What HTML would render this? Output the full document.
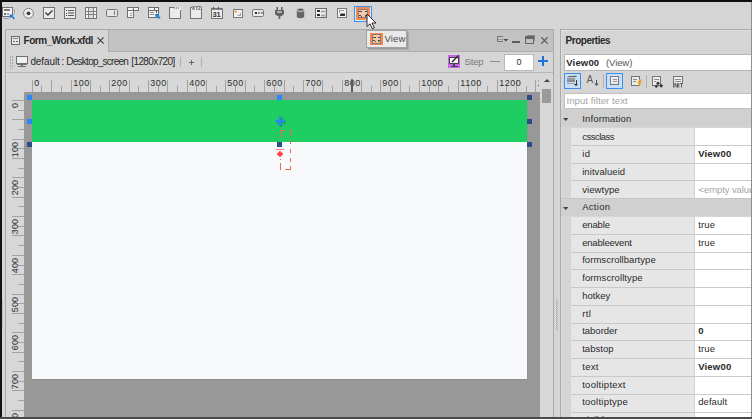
<!DOCTYPE html>
<html><head><meta charset="utf-8">
<style>
*{margin:0;padding:0;box-sizing:border-box}
html,body{width:752px;height:419px;overflow:hidden}
body{position:relative;background:#d5d5d5;font-family:"Liberation Sans",sans-serif;font-size:10px;color:#222}
.a{position:absolute}
.t{position:absolute;white-space:nowrap;line-height:1}
svg{shape-rendering:crispEdges}
.ge{shape-rendering:geometricPrecision}
</style></head>
<body>

<svg class="a" style="left:2px;top:6px;" width="14" height="14" viewBox="0 0 14 14"><rect x="0.5" y="1.5" width="10" height="9" fill="#f4f4f4" stroke="#737373"/><rect x="2" y="3" width="6" height="2" fill="#7c7c7c"/><rect x="2" y="6.5" width="2" height="2" fill="#6a6a6a"/><rect x="5" y="6.5" width="2" height="2" fill="#9a9a9a"/><rect x="1" y="11.5" width="6" height="1" fill="#a0a0a0"/><rect x="11.5" y="3" width="1" height="5" fill="#a8a8a8"/><path class="ge" d="M7.5 8.5 L12 8.5 L10.6 9.9 L13 12.3 L11.8 13.5 L9.4 11.1 L8 12.5 Z" fill="#1f7fe6"/></svg>
<svg class="a" style="left:23px;top:8px;shape-rendering:geometricPrecision" width="11" height="11" viewBox="0 0 11 11"><circle cx="5.5" cy="5.3" r="4.9" fill="#f0f0f0" stroke="#7d7d7d" stroke-width="1"/><circle cx="5.5" cy="5.3" r="1.9" fill="#3f3f3f"/></svg>
<svg class="a" style="left:43px;top:7px;" width="12" height="12" viewBox="0 0 12 12"><rect x="0.5" y="0.5" width="11" height="11" fill="#ebebeb" stroke="#727272"/><path class="ge" d="M2.5 5.6 L4.9 8.1 L9.5 3.6" fill="none" stroke="#3d3d3d" stroke-width="1.4"/></svg>
<svg class="a" style="left:64px;top:7px;" width="12" height="12" viewBox="0 0 12 12"><rect x="0.5" y="0.5" width="11" height="11" fill="#ececec" stroke="#727272"/><rect x="2" y="3" width="1" height="1" fill="#444"/><rect x="4" y="3" width="6" height="1" fill="#5a5a5a"/><rect x="2" y="5.5" width="1" height="1" fill="#444"/><rect x="4" y="5.3" width="6" height="1.4" fill="#999"/><rect x="2" y="8" width="1" height="1" fill="#444"/><rect x="4" y="8" width="6" height="1" fill="#5a5a5a"/></svg>
<svg class="a" style="left:85px;top:7px;" width="12" height="12" viewBox="0 0 12 12"><rect x="0.5" y="0.5" width="11" height="11" fill="#f4f4f4" stroke="#727272"/><path d="M0 4.5H12M0 7.5H12M3.5 0V12M8.5 0V12" stroke="#808080" fill="none"/><rect x="4" y="1" width="4" height="3" fill="#dcdcdc"/><rect x="4" y="5" width="4" height="2" fill="#dcdcdc"/><rect x="4" y="8" width="4" height="3" fill="#dcdcdc"/></svg>
<svg class="a" style="left:106px;top:9px;" width="12" height="8" viewBox="0 0 12 8"><rect x="0.5" y="0.5" width="11" height="7" rx="1.2" fill="#e6e6e6" stroke="#777" class="ge"/><rect x="8" y="2" width="1" height="4" fill="#7a7a7a"/></svg>
<svg class="a" style="left:127px;top:7px;" width="12" height="11" viewBox="0 0 12 11"><rect x="0.5" y="0.5" width="11" height="3" fill="#f4f4f4" stroke="#707070"/><rect x="6" y="0.5" width="1" height="3" fill="#707070"/><rect x="0.5" y="3.5" width="6" height="7" fill="#f4f4f4" stroke="#707070"/><rect x="2.5" y="5.5" width="2" height="1" fill="#999"/><rect x="2.5" y="7.5" width="2" height="1" fill="#999"/></svg>
<svg class="a" style="left:148px;top:7px;" width="13" height="12" viewBox="0 0 13 12"><rect x="0.5" y="0.5" width="10" height="10" fill="#f6f6f6" stroke="#6c6c6c"/><rect x="0.5" y="0.5" width="10" height="2.5" fill="#f6f6f6" stroke="#6c6c6c"/><rect x="6" y="0.5" width="1" height="2.5" fill="#6c6c6c"/><rect x="7.5" y="3" width="1" height="2.5" fill="#555"/><rect x="2" y="5" width="4" height="1" fill="#888"/><rect x="2" y="7" width="4" height="1" fill="#888"/><path class="ge" d="M7 7 L11.5 7 L10.2 8.3 L12.6 10.7 L11.4 11.9 L9 9.5 L7.7 10.8 Z" fill="#1f7fe6"/></svg>
<svg class="a" style="left:169px;top:7px;" width="12" height="12" viewBox="0 0 12 12"><rect x="0.5" y="0.5" width="11" height="11" fill="#ebebeb" stroke="#737373"/><rect x="4.5" y="0" width="7" height="2.6" fill="#ebebeb"/><rect x="5" y="0.3" width="1.3" height="1.8" fill="#9a9a9a"/><rect x="7" y="0.3" width="1.3" height="1.8" fill="#9a9a9a"/><rect x="9" y="0.3" width="1.3" height="1.8" fill="#9a9a9a"/></svg>
<svg class="a" style="left:190px;top:7px;" width="12" height="12" viewBox="0 0 12 12"><rect x="0.5" y="0.5" width="11" height="11" fill="#ebebeb" stroke="#737373"/><rect x="1.5" y="0" width="9" height="3.6" fill="#ebebeb"/></svg>
<div class="t" style="left:191.8px;top:6.6px;font-size:4.8px;font-weight:bold;color:#4a4a4a;letter-spacing:-0.1px">XYZ</div>
<svg class="a" style="left:211px;top:7px;" width="12" height="12" viewBox="0 0 12 12"><rect x="0.5" y="1.5" width="11" height="10" fill="#ededed" stroke="#737373"/><rect x="1" y="2" width="10" height="1" fill="#8a8a8a"/><rect x="2" y="0" width="1" height="2" fill="#555"/><rect x="4" y="0.5" width="1.5" height="1.5" fill="#777"/><rect x="6.5" y="0" width="1" height="2" fill="#555"/><rect x="8.5" y="0.5" width="1.5" height="1.5" fill="#777"/></svg>
<div class="t" style="left:212.4px;top:11px;font-size:7.6px;font-weight:bold;color:#3a3a3a;letter-spacing:-0.1px">31</div>
<svg class="a" style="left:233px;top:9px;shape-rendering:geometricPrecision" width="10" height="9" viewBox="0 0 10 9"><rect x="0.5" y="0.5" width="9" height="8" fill="#f2f2f2" stroke="#787878"/><circle cx="2.7" cy="2.6" r="1.2" fill="#eea020"/><path d="M4.5 7 L8 7 L8 4 L7 4 L7 5.5 L6 5.5 L6 6 L4.5 6 Z" fill="#a4a4a4"/></svg>
<svg class="a" style="left:252px;top:9px;" width="12" height="8" viewBox="0 0 12 8"><rect x="0.5" y="0.5" width="11" height="7" rx="1.2" fill="#e9e9e9" stroke="#777" class="ge"/><rect x="2.5" y="3" width="2" height="2" fill="#2f2f2f"/><rect x="5.5" y="3" width="2" height="2" fill="#8e8e8e"/><rect x="8.5" y="3" width="2" height="2" fill="#8e8e8e"/></svg>
<svg class="a" style="left:275px;top:7px;shape-rendering:geometricPrecision" width="9" height="12" viewBox="0 0 9 12"><rect x="1.5" y="0" width="1.5" height="3.5" fill="#5e5e5e"/><rect x="6" y="0" width="1.5" height="3.5" fill="#5e5e5e"/><path d="M0 3 H9 V6.3 Q9 8.3 5.3 9.2 V12 H3.7 V9.2 Q0 8.3 0 6.3 Z" fill="#626262"/><rect x="2" y="4.3" width="5" height="1.3" fill="#d8d8d8"/></svg>
<svg class="a" style="left:296px;top:8px;shape-rendering:geometricPrecision" width="9" height="11" viewBox="0 0 9 11"><path d="M0.8 1.8 Q4.5 -0.6 8.2 1.8 V9.2 Q4.5 11.2 0.8 9.2 Z" fill="#666"/><path d="M0.8 2.6 Q4.5 4.6 8.2 2.6" stroke="#dcdcdc" fill="none" stroke-width="0.9"/></svg>
<svg class="a" style="left:315px;top:8px;" width="12" height="10" viewBox="0 0 12 10"><rect x="0.5" y="0.5" width="11" height="9" fill="#f0f0f0" stroke="#6c6c6c"/><rect x="2" y="2" width="2.5" height="2" fill="#2e2e2e"/><rect x="2" y="6" width="2.5" height="2" fill="#2e2e2e"/><rect x="5.5" y="1.5" width="5" height="3" fill="#cfcfcf"/><rect x="5.5" y="5.5" width="5" height="3" fill="#cfcfcf"/><rect x="6" y="2.7" width="4" height="0.8" fill="#a0a0a0"/><rect x="6" y="6.7" width="4" height="0.8" fill="#a0a0a0"/></svg>
<svg class="a" style="left:337px;top:8px;shape-rendering:geometricPrecision" width="10" height="10" viewBox="0 0 10 10"><rect x="0.5" y="0.5" width="9" height="9" fill="#f4f4f4" stroke="#777"/><rect x="2" y="2" width="5" height="1" fill="#9a9a9a"/><rect x="2" y="3" width="1" height="2" fill="#9a9a9a"/><path d="M3 8 L3 6.5 Q3 5.5 4 5.5 L8 5.5 L8 8 Z" fill="#2e2e2e"/></svg>
<div class="a" style="left:354px;top:6px;width:18px;height:16px;border:1px solid #3b8ff5;background:#dde9f7"></div>
<svg class="a" style="left:356px;top:7px;" width="14" height="13" viewBox="0 0 14 13"><rect x="0" y="0" width="14" height="13" fill="#f58b50"/><rect x="2.5" y="2.5" width="9" height="8" fill="#f9c6a8" stroke="#857a74"/><path d="M3 4.5 H5 M5 3.5 V4.5 M9 4.5 H11 M9 3.5 V4.5 M3 8.5 H5 M5 8.5 V9.5 M9 8.5 H11 M9 8.5 V9.5" stroke="#4a4a4a" stroke-width="1" fill="none"/></svg>
<div class="a" style="left:5px;top:29px;width:549px;height:388px;border:1px solid #a9a9a9;border-bottom:none;background:#d5d5d5"></div>
<div class="a" style="left:6px;top:30px;width:547px;height:21px;background:#c2c2c2"></div>
<div class="a" style="left:6px;top:51px;width:547px;height:1px;background:#adadad"></div>
<div class="a" style="left:6px;top:30px;width:103px;height:22px;background:#d5d5d5;border-right:1px solid #adadad"></div>
<svg class="a" style="left:11px;top:36px;" width="9" height="9" viewBox="0 0 9 9"><rect x="0.5" y="0.5" width="8" height="8" fill="#e6e6e6" stroke="#6a6a6a"/><rect x="2" y="2" width="5" height="1" fill="#8a8a8a"/><rect x="2" y="5" width="2" height="1" fill="#6a6a6a"/><rect x="5" y="5" width="2" height="1" fill="#6a6a6a"/><rect x="2" y="3.5" width="5" height="0.8" fill="#aaa"/></svg>
<div class="t" style="left:23.6px;top:36px;font-size:10px;letter-spacing:-0.472px;font-weight:bold;color:#2a2a2a">Form_Work.xfdl</div>
<svg class="a" style="left:97px;top:37px;shape-rendering:geometricPrecision" width="7" height="7" viewBox="0 0 7 7"><path d="M0.4 0.4 L6.6 6.6 M6.6 0.4 L0.4 6.6" stroke="#3a3a3a" stroke-width="1.05" fill="none"/></svg>
<svg class="a" style="left:497px;top:36px;" width="12" height="7" viewBox="0 0 12 7"><rect x="0" y="0" width="6" height="1" fill="#777"/><rect x="0" y="0" width="1" height="6" fill="#777"/><rect x="1" y="2.5" width="5" height="1" fill="#9a9a9a"/><rect x="0" y="5" width="6" height="1" fill="#777"/><path d="M6.3 3 L11.3 3 L8.8 5.6 Z" fill="#4a4a4a" class="ge"/></svg>
<div class="a" style="left:512px;top:41px;width:8px;height:2px;background:#5e5e5e"></div>
<svg class="a" style="left:525px;top:35px;" width="10" height="9" viewBox="0 0 10 9"><rect x="0.5" y="1.5" width="8" height="7" fill="none" stroke="#666"/><rect x="1" y="2" width="7" height="1.5" fill="#666"/><path d="M2 0.5 H9.5 V6" stroke="#888" fill="none"/></svg>
<svg class="a" style="left:541px;top:37px;shape-rendering:geometricPrecision" width="7" height="7" viewBox="0 0 7 7"><path d="M0.3 0.3 L6.7 6.7 M6.7 0.3 L0.3 6.7" stroke="#505050" stroke-width="1.1" fill="none"/></svg>
<div class="a" style="left:6px;top:72px;width:547px;height:1px;background:#b6b6b6"></div>
<svg class="a" style="left:10px;top:56px;" width="3" height="13" viewBox="0 0 3 13"><rect x="0" y="0" width="1" height="1.5" fill="#a8a8a8"/><rect x="2" y="0" width="1" height="1.5" fill="#a8a8a8"/><rect x="0" y="3" width="1" height="1.5" fill="#a8a8a8"/><rect x="2" y="3" width="1" height="1.5" fill="#a8a8a8"/><rect x="0" y="6" width="1" height="1.5" fill="#a8a8a8"/><rect x="2" y="6" width="1" height="1.5" fill="#a8a8a8"/><rect x="0" y="9" width="1" height="1.5" fill="#a8a8a8"/><rect x="2" y="9" width="1" height="1.5" fill="#a8a8a8"/><rect x="0" y="12" width="1" height="1.5" fill="#a8a8a8"/><rect x="2" y="12" width="1" height="1.5" fill="#a8a8a8"/></svg>
<svg class="a" style="left:16px;top:56px;" width="12" height="11" viewBox="0 0 12 11"><rect x="0.5" y="0.5" width="11" height="7.5" rx="0.8" fill="#f0f0f0" stroke="#707070"/><rect x="1" y="7" width="10" height="1.5" fill="#707070"/><rect x="5" y="8.5" width="2" height="1.5" fill="#777"/><rect x="2" y="10" width="8" height="1" fill="#707070"/></svg>
<div class="t" style="left:30.4px;top:57px;font-size:10px;letter-spacing:-0.089px;color:#2a2a2a">default</div>
<div class="t" style="left:61.6px;top:57px;font-size:10px;color:#2a2a2a">:</div>
<div class="t" style="left:66.3px;top:57px;font-size:10px;letter-spacing:-0.744px;color:#2a2a2a">Desktop_screen</div>
<div class="t" style="left:131.3px;top:57px;font-size:10px;letter-spacing:-0.611px;color:#2a2a2a">[1280x720]</div>
<div class="a" style="left:180px;top:57px;width:1px;height:10px;background:#b0b0b0"></div>
<svg class="a" style="left:189px;top:60px;" width="5" height="5" viewBox="0 0 5 5"><rect x="2" y="0" width="1" height="5" fill="#666"/><rect x="0" y="2" width="5" height="1" fill="#666"/></svg>
<div class="a" style="left:201px;top:57px;width:1px;height:10px;background:#b0b0b0"></div>
<svg class="a" style="left:448px;top:55px;" width="12" height="13" viewBox="0 0 12 13"><rect x="0" y="0" width="12" height="13" fill="#c467ee"/><rect x="1.5" y="2.5" width="9" height="6" fill="#f2f2f2" stroke="#444"/><rect x="5" y="9" width="2" height="2" fill="#444"/><rect x="2.5" y="11" width="7" height="1" fill="#444"/><path class="ge" d="M4 7 L10.5 0.5" stroke="#222" stroke-width="1.3"/></svg>
<div class="t" style="left:464.6px;top:57px;font-size:9.5px;letter-spacing:-0.182px;color:#7a7a7a">Step</div>
<div class="a" style="left:490px;top:61px;width:10px;height:1px;background:#8e8e8e"></div>
<div class="a" style="left:504px;top:54px;width:30px;height:17px;background:#fff;border:1px solid #b8b8b8"></div>
<div class="t" style="left:516.5px;top:58px;font-size:9px;color:#333">0</div>
<svg class="a" style="left:538px;top:56px;" width="10" height="10" viewBox="0 0 10 10"><rect x="4" y="0" width="2" height="10" fill="#1f6fe0"/><rect x="0" y="4" width="10" height="2" fill="#1f6fe0"/></svg>
<div class="a" style="left:6px;top:73px;width:534px;height:19px;background:#d7d7d7"></div>
<div class="a" style="left:6px;top:92px;width:18px;height:325px;background:#d7d7d7"></div>
<svg class="a" style="left:0;top:0" width="540" height="92"><rect x="32" y="80" width="1" height="12" fill="#a2a2a2"/><rect x="41" y="86" width="1" height="6" fill="#a2a2a2"/><rect x="51" y="80" width="1" height="12" fill="#a2a2a2"/><rect x="61" y="86" width="1" height="6" fill="#a2a2a2"/><rect x="71" y="80" width="1" height="12" fill="#a2a2a2"/><rect x="80" y="86" width="1" height="6" fill="#a2a2a2"/><rect x="90" y="80" width="1" height="12" fill="#a2a2a2"/><rect x="100" y="86" width="1" height="6" fill="#a2a2a2"/><rect x="109" y="80" width="1" height="12" fill="#a2a2a2"/><rect x="119" y="86" width="1" height="6" fill="#a2a2a2"/><rect x="129" y="80" width="1" height="12" fill="#a2a2a2"/><rect x="138" y="86" width="1" height="6" fill="#a2a2a2"/><rect x="148" y="80" width="1" height="12" fill="#a2a2a2"/><rect x="158" y="86" width="1" height="6" fill="#a2a2a2"/><rect x="167" y="80" width="1" height="12" fill="#a2a2a2"/><rect x="177" y="86" width="1" height="6" fill="#a2a2a2"/><rect x="187" y="80" width="1" height="12" fill="#a2a2a2"/><rect x="196" y="86" width="1" height="6" fill="#a2a2a2"/><rect x="206" y="80" width="1" height="12" fill="#a2a2a2"/><rect x="216" y="86" width="1" height="6" fill="#a2a2a2"/><rect x="225" y="80" width="1" height="12" fill="#a2a2a2"/><rect x="235" y="86" width="1" height="6" fill="#a2a2a2"/><rect x="245" y="80" width="1" height="12" fill="#a2a2a2"/><rect x="254" y="86" width="1" height="6" fill="#a2a2a2"/><rect x="264" y="80" width="1" height="12" fill="#a2a2a2"/><rect x="274" y="86" width="1" height="6" fill="#a2a2a2"/><rect x="284" y="80" width="1" height="12" fill="#a2a2a2"/><rect x="293" y="86" width="1" height="6" fill="#a2a2a2"/><rect x="303" y="80" width="1" height="12" fill="#a2a2a2"/><rect x="313" y="86" width="1" height="6" fill="#a2a2a2"/><rect x="322" y="80" width="1" height="12" fill="#a2a2a2"/><rect x="332" y="86" width="1" height="6" fill="#a2a2a2"/><rect x="342" y="80" width="1" height="12" fill="#a2a2a2"/><rect x="351" y="86" width="1" height="6" fill="#a2a2a2"/><rect x="361" y="80" width="1" height="12" fill="#a2a2a2"/><rect x="371" y="86" width="1" height="6" fill="#a2a2a2"/><rect x="380" y="80" width="1" height="12" fill="#a2a2a2"/><rect x="390" y="86" width="1" height="6" fill="#a2a2a2"/><rect x="400" y="80" width="1" height="12" fill="#a2a2a2"/><rect x="409" y="86" width="1" height="6" fill="#a2a2a2"/><rect x="419" y="80" width="1" height="12" fill="#a2a2a2"/><rect x="429" y="86" width="1" height="6" fill="#a2a2a2"/><rect x="438" y="80" width="1" height="12" fill="#a2a2a2"/><rect x="448" y="86" width="1" height="6" fill="#a2a2a2"/><rect x="458" y="80" width="1" height="12" fill="#a2a2a2"/><rect x="468" y="86" width="1" height="6" fill="#a2a2a2"/><rect x="477" y="80" width="1" height="12" fill="#a2a2a2"/><rect x="487" y="86" width="1" height="6" fill="#a2a2a2"/><rect x="497" y="80" width="1" height="12" fill="#a2a2a2"/><rect x="506" y="86" width="1" height="6" fill="#a2a2a2"/><rect x="516" y="80" width="1" height="12" fill="#a2a2a2"/><rect x="526" y="86" width="1" height="6" fill="#a2a2a2"/><rect x="535" y="80" width="1" height="12" fill="#a2a2a2"/></svg>
<div class="a" style="left:0;top:0;width:539px;height:92px;overflow:hidden"><div class="t" style="left:34.3px;top:78.6px;font-size:9px;color:#2e2e2e;letter-spacing:0.5px">0</div><div class="t" style="left:73.3px;top:78.6px;font-size:9px;color:#2e2e2e;letter-spacing:0.5px">100</div><div class="t" style="left:111.3px;top:78.6px;font-size:9px;color:#2e2e2e;letter-spacing:0.5px">200</div><div class="t" style="left:150.3px;top:78.6px;font-size:9px;color:#2e2e2e;letter-spacing:0.5px">300</div><div class="t" style="left:189.3px;top:78.6px;font-size:9px;color:#2e2e2e;letter-spacing:0.5px">400</div><div class="t" style="left:227.3px;top:78.6px;font-size:9px;color:#2e2e2e;letter-spacing:0.5px">500</div><div class="t" style="left:266.3px;top:78.6px;font-size:9px;color:#2e2e2e;letter-spacing:0.5px">600</div><div class="t" style="left:305.3px;top:78.6px;font-size:9px;color:#2e2e2e;letter-spacing:0.5px">700</div><div class="t" style="left:344.3px;top:78.6px;font-size:9px;color:#2e2e2e;letter-spacing:0.5px">800</div><div class="t" style="left:382.3px;top:78.6px;font-size:9px;color:#2e2e2e;letter-spacing:0.5px">900</div><div class="t" style="left:421.3px;top:78.6px;font-size:9px;color:#2e2e2e;letter-spacing:0.5px">1000</div><div class="t" style="left:460.3px;top:78.6px;font-size:9px;color:#2e2e2e;letter-spacing:0.5px">1100</div><div class="t" style="left:499.3px;top:78.6px;font-size:9px;color:#2e2e2e;letter-spacing:0.5px">1200</div><div class="t" style="left:537.3px;top:78.6px;font-size:9px;color:#2e2e2e;letter-spacing:0.5px">1300</div></div>
<div class="a" style="left:351px;top:79px;width:2px;height:13px;background:#5a5a5a;border-radius:1px 1px 0 0"></div>
<svg class="a" style="left:0;top:0" width="24" height="417"><rect x="12" y="100" width="12" height="1" fill="#a2a2a2"/><rect x="18" y="110" width="6" height="1" fill="#a2a2a2"/><rect x="12" y="119" width="12" height="1" fill="#a2a2a2"/><rect x="18" y="129" width="6" height="1" fill="#a2a2a2"/><rect x="12" y="139" width="12" height="1" fill="#a2a2a2"/><rect x="18" y="148" width="6" height="1" fill="#a2a2a2"/><rect x="12" y="158" width="12" height="1" fill="#a2a2a2"/><rect x="18" y="168" width="6" height="1" fill="#a2a2a2"/><rect x="12" y="177" width="12" height="1" fill="#a2a2a2"/><rect x="18" y="187" width="6" height="1" fill="#a2a2a2"/><rect x="12" y="197" width="12" height="1" fill="#a2a2a2"/><rect x="18" y="206" width="6" height="1" fill="#a2a2a2"/><rect x="12" y="216" width="12" height="1" fill="#a2a2a2"/><rect x="18" y="226" width="6" height="1" fill="#a2a2a2"/><rect x="12" y="235" width="12" height="1" fill="#a2a2a2"/><rect x="18" y="245" width="6" height="1" fill="#a2a2a2"/><rect x="12" y="255" width="12" height="1" fill="#a2a2a2"/><rect x="18" y="265" width="6" height="1" fill="#a2a2a2"/><rect x="12" y="274" width="12" height="1" fill="#a2a2a2"/><rect x="18" y="284" width="6" height="1" fill="#a2a2a2"/><rect x="12" y="294" width="12" height="1" fill="#a2a2a2"/><rect x="18" y="303" width="6" height="1" fill="#a2a2a2"/><rect x="12" y="313" width="12" height="1" fill="#a2a2a2"/><rect x="18" y="323" width="6" height="1" fill="#a2a2a2"/><rect x="12" y="332" width="12" height="1" fill="#a2a2a2"/><rect x="18" y="342" width="6" height="1" fill="#a2a2a2"/><rect x="12" y="352" width="12" height="1" fill="#a2a2a2"/><rect x="18" y="361" width="6" height="1" fill="#a2a2a2"/><rect x="12" y="371" width="12" height="1" fill="#a2a2a2"/><rect x="18" y="381" width="6" height="1" fill="#a2a2a2"/><rect x="12" y="390" width="12" height="1" fill="#a2a2a2"/><rect x="18" y="400" width="6" height="1" fill="#a2a2a2"/><rect x="12" y="410" width="12" height="1" fill="#a2a2a2"/></svg>
<div class="a" style="left:0;top:92px;width:24px;height:325px;overflow:hidden"><div class="a" style="left:0;top:-92px"><div class="t" style="left:10.8px;top:102.7px;font-size:9px;color:#2e2e2e;letter-spacing:0.05px;transform-origin:0 0;transform:rotate(-90deg) translate(-100%,0)">0</div><div class="t" style="left:10.8px;top:141.7px;font-size:9px;color:#2e2e2e;letter-spacing:0.05px;transform-origin:0 0;transform:rotate(-90deg) translate(-100%,0)">100</div><div class="t" style="left:10.8px;top:179.7px;font-size:9px;color:#2e2e2e;letter-spacing:0.05px;transform-origin:0 0;transform:rotate(-90deg) translate(-100%,0)">200</div><div class="t" style="left:10.8px;top:218.7px;font-size:9px;color:#2e2e2e;letter-spacing:0.05px;transform-origin:0 0;transform:rotate(-90deg) translate(-100%,0)">300</div><div class="t" style="left:10.8px;top:257.7px;font-size:9px;color:#2e2e2e;letter-spacing:0.05px;transform-origin:0 0;transform:rotate(-90deg) translate(-100%,0)">400</div><div class="t" style="left:10.8px;top:296.7px;font-size:9px;color:#2e2e2e;letter-spacing:0.05px;transform-origin:0 0;transform:rotate(-90deg) translate(-100%,0)">500</div><div class="t" style="left:10.8px;top:334.7px;font-size:9px;color:#2e2e2e;letter-spacing:0.05px;transform-origin:0 0;transform:rotate(-90deg) translate(-100%,0)">600</div><div class="t" style="left:10.8px;top:373.7px;font-size:9px;color:#2e2e2e;letter-spacing:0.05px;transform-origin:0 0;transform:rotate(-90deg) translate(-100%,0)">700</div><div class="t" style="left:10.8px;top:412.7px;font-size:9px;color:#2e2e2e;letter-spacing:0.05px;transform-origin:0 0;transform:rotate(-90deg) translate(-100%,0)">800</div></div></div>
<div class="a" style="left:24px;top:92px;width:516px;height:325px;background:#989898"></div>
<div class="a" style="left:32px;top:100px;width:495px;height:279px;background:#f8f9fb"></div>
<div class="a" style="left:32px;top:379px;width:496px;height:1px;background:#8f8f8f"></div>
<div class="a" style="left:527px;top:100px;width:1px;height:279px;background:#939393"></div>
<div class="a" style="left:32px;top:100px;width:495px;height:42px;background:#1fce63"></div>
<div class="a" style="left:27px;top:95px;width:5px;height:5px;background:#2a86fb"></div>
<div class="a" style="left:277px;top:95px;width:5px;height:5px;background:#2a86fb"></div>
<div class="a" style="left:527px;top:95px;width:5px;height:5px;background:#2b4c87"></div>
<div class="a" style="left:27px;top:119px;width:5px;height:5px;background:#2a86fb"></div>
<div class="a" style="left:527px;top:119px;width:5px;height:5px;background:#2b4c87"></div>
<div class="a" style="left:27px;top:142px;width:5px;height:5px;background:#2b4c87"></div>
<div class="a" style="left:277px;top:142px;width:5px;height:5px;background:#2b4c87"></div>
<div class="a" style="left:527px;top:142px;width:5px;height:5px;background:#2b4c87"></div>
<svg class="a" style="left:274.8px;top:115.8px;shape-rendering:geometricPrecision" width="11" height="11" viewBox="0 0 11.6 11.6"><path d="M5.5 0 L8 2.5 L6.5 2.5 L6.5 4.5 L8.5 4.5 L8.5 3 L11 5.5 L8.5 8 L8.5 6.5 L6.5 6.5 L6.5 8.5 L8 8.5 L5.5 11 L3 8.5 L4.5 8.5 L4.5 6.5 L2.5 6.5 L2.5 8 L0 5.5 L2.5 3 L2.5 4.5 L4.5 4.5 L4.5 2.5 L3 2.5 Z" transform="translate(0.9,0.9)" fill="rgba(0,60,30,0.35)"/><path d="M5.5 0 L8 2.5 L6.5 2.5 L6.5 4.5 L8.5 4.5 L8.5 3 L11 5.5 L8.5 8 L8.5 6.5 L6.5 6.5 L6.5 8.5 L8 8.5 L5.5 11 L3 8.5 L4.5 8.5 L4.5 6.5 L2.5 6.5 L2.5 8 L0 5.5 L2.5 3 L2.5 4.5 L4.5 4.5 L4.5 2.5 L3 2.5 Z" fill="#2a86fb"/></svg>
<svg class="a" style="left:0;top:0" width="300" height="175"><rect x="279.5" y="130" width="5" height="1" fill="#f06a5c"/><rect x="288.5" y="130" width="2" height="1" fill="#f06a5c"/><rect x="290" y="130" width="1" height="5.5" fill="#f06a5c"/><rect x="290" y="139.5" width="1" height="4.5" fill="#f06a5c"/><rect x="290" y="148.5" width="1" height="4.5" fill="#f06a5c"/><rect x="290" y="157.5" width="1" height="4.5" fill="#f06a5c"/><rect x="290" y="165.5" width="1" height="4" fill="#f06a5c"/><rect x="285" y="169" width="6" height="1" fill="#f06a5c"/><rect x="280" y="131" width="1" height="7" fill="#f06a5c"/><rect x="280" y="158.5" width="1" height="1" fill="#f06a5c"/><rect x="280" y="163" width="1" height="6.5" fill="#f06a5c"/><rect x="276" y="149" width="8" height="1" fill="#ff7a72"/><path d="M280 150.8 L283.4 154 L280 157.2 L276.6 154 Z" fill="#ff4848" style="shape-rendering:geometricPrecision"/></svg>
<div class="a" style="left:540px;top:73px;width:13px;height:344px;background:#d7d7d7"></div>
<svg class="a" style="left:544px;top:79px;" width="6" height="3" viewBox="0 0 6 3"><path d="M0 3 L3 0 L6 3 Z" fill="#444" class="ge"/></svg>
<div class="a" style="left:542px;top:89px;width:9px;height:14px;background:#9a9a9a"></div>
<svg class="a" style="left:2px;top:299px;" width="2" height="31" viewBox="0 0 2 31"><rect x="0" y="0" width="1" height="1" fill="#b4b4b4"/><rect x="0" y="2" width="1" height="1" fill="#b4b4b4"/><rect x="0" y="4" width="1" height="1" fill="#b4b4b4"/><rect x="0" y="6" width="1" height="1" fill="#b4b4b4"/><rect x="0" y="8" width="1" height="1" fill="#b4b4b4"/><rect x="0" y="10" width="1" height="1" fill="#b4b4b4"/><rect x="0" y="12" width="1" height="1" fill="#b4b4b4"/><rect x="0" y="14" width="1" height="1" fill="#b4b4b4"/><rect x="0" y="16" width="1" height="1" fill="#b4b4b4"/><rect x="0" y="18" width="1" height="1" fill="#b4b4b4"/><rect x="0" y="20" width="1" height="1" fill="#b4b4b4"/><rect x="0" y="22" width="1" height="1" fill="#b4b4b4"/><rect x="0" y="24" width="1" height="1" fill="#b4b4b4"/><rect x="0" y="26" width="1" height="1" fill="#b4b4b4"/><rect x="0" y="28" width="1" height="1" fill="#b4b4b4"/><rect x="0" y="30" width="1" height="1" fill="#b4b4b4"/></svg>
<div class="a" style="left:554px;top:29px;width:6px;height:388px;background:#d5d5d5"></div>
<div class="a" style="left:560px;top:29px;width:192px;height:388px;border-left:1px solid #a9a9a9;border-top:1px solid #a9a9a9;background:#d5d5d5"></div>
<div class="a" style="left:561px;top:30px;width:190px;height:1px;background:#e2e2e2"></div>
<div class="a" style="left:561px;top:30px;width:1px;height:387px;background:#dedede"></div>
<svg class="a" style="left:556px;top:299px;" width="2" height="31" viewBox="0 0 2 31"><rect x="0" y="0" width="1" height="1" fill="#a0a0a0"/><rect x="1" y="1" width="1" height="1" fill="#b8b8b8"/><rect x="0" y="2" width="1" height="1" fill="#a0a0a0"/><rect x="1" y="3" width="1" height="1" fill="#b8b8b8"/><rect x="0" y="4" width="1" height="1" fill="#a0a0a0"/><rect x="1" y="5" width="1" height="1" fill="#b8b8b8"/><rect x="0" y="6" width="1" height="1" fill="#a0a0a0"/><rect x="1" y="7" width="1" height="1" fill="#b8b8b8"/><rect x="0" y="8" width="1" height="1" fill="#a0a0a0"/><rect x="1" y="9" width="1" height="1" fill="#b8b8b8"/><rect x="0" y="10" width="1" height="1" fill="#a0a0a0"/><rect x="1" y="11" width="1" height="1" fill="#b8b8b8"/><rect x="0" y="12" width="1" height="1" fill="#a0a0a0"/><rect x="1" y="13" width="1" height="1" fill="#b8b8b8"/><rect x="0" y="14" width="1" height="1" fill="#a0a0a0"/><rect x="1" y="15" width="1" height="1" fill="#b8b8b8"/><rect x="0" y="16" width="1" height="1" fill="#a0a0a0"/><rect x="1" y="17" width="1" height="1" fill="#b8b8b8"/><rect x="0" y="18" width="1" height="1" fill="#a0a0a0"/><rect x="1" y="19" width="1" height="1" fill="#b8b8b8"/><rect x="0" y="20" width="1" height="1" fill="#a0a0a0"/><rect x="1" y="21" width="1" height="1" fill="#b8b8b8"/><rect x="0" y="22" width="1" height="1" fill="#a0a0a0"/><rect x="1" y="23" width="1" height="1" fill="#b8b8b8"/><rect x="0" y="24" width="1" height="1" fill="#a0a0a0"/><rect x="1" y="25" width="1" height="1" fill="#b8b8b8"/><rect x="0" y="26" width="1" height="1" fill="#a0a0a0"/><rect x="1" y="27" width="1" height="1" fill="#b8b8b8"/><rect x="0" y="28" width="1" height="1" fill="#a0a0a0"/><rect x="1" y="29" width="1" height="1" fill="#b8b8b8"/><rect x="0" y="30" width="1" height="1" fill="#a0a0a0"/><rect x="1" y="31" width="1" height="1" fill="#b8b8b8"/></svg>
<div class="t" style="left:565.6px;top:36px;font-size:10px;letter-spacing:-0.497px;font-weight:bold;color:#2a2a2a">Properties</div>
<div class="a" style="left:564px;top:54px;width:190px;height:17px;background:#fff;border:1px solid #b5b5b5;border-radius:1px"></div>
<div class="t" style="left:566.3px;top:58px;font-size:9.5px;letter-spacing:0.151px;font-weight:bold;color:#2a2a2a">View00</div>
<div class="t" style="left:606px;top:58px;font-size:9.5px;letter-spacing:-0.090px;color:#555">(View)</div>
<div class="a" style="left:564px;top:73px;width:17px;height:16px;background:#c6def6;border:1px solid #3f8ff0"></div>
<svg class="a" style="left:567px;top:75px;" width="11" height="12" viewBox="0 0 11 12"><path d="M1 1.3 L10 0.8 L9 2 L0 2.3 Z" fill="#5e5e5e" class="ge"/><rect x="0" y="3.2" width="8" height="1.3" fill="#9a9a9a"/><rect x="0" y="5.4" width="8" height="1.3" fill="#8a8a8a"/><rect x="0" y="7.6" width="8" height="1.3" fill="#a0a0a0"/><rect x="8.5" y="4.5" width="1" height="5" fill="#3a3a3a"/><path d="M7 9 L11 9 L9 11.2 Z" fill="#3a3a3a" class="ge"/></svg>
<div class="t" style="left:586.6px;top:75px;font-size:10px;color:#5a5a5a">A</div>
<svg class="a" style="left:594px;top:80px;" width="5" height="6" viewBox="0 0 5 6"><rect x="2" y="0" width="1" height="4.5" fill="#555"/><path d="M0.2 3.6 L4.8 3.6 L2.5 6 Z" fill="#555" class="ge"/></svg>
<div class="a" style="left:603px;top:74px;width:1px;height:14px;background:#b4b4b4"></div>
<div class="a" style="left:606px;top:73px;width:17px;height:16px;background:#c6def6;border:1px solid #3f8ff0"></div>
<svg class="a" style="left:610px;top:76px;" width="9" height="9" viewBox="0 0 9 9"><rect x="0.5" y="0.5" width="8" height="8" fill="#ececec" stroke="#7a7a7a"/><rect x="2.5" y="3" width="4" height="1" fill="#999"/><rect x="2.5" y="5" width="4" height="1" fill="#999"/><rect x="1" y="1" width="7" height="1" fill="#fafafa"/></svg>
<svg class="a" style="left:631px;top:76px;" width="11" height="11" viewBox="0 0 11 11"><rect x="0.5" y="0.5" width="8" height="9" fill="#eaeaea" stroke="#747474"/><rect x="2" y="3" width="4" height="1" fill="#8a8a8a"/><rect x="2" y="5" width="3" height="1" fill="#8a8a8a"/><path class="ge" d="M8 3.5 L10.8 3.5 L9.2 6.5 L11 6.5 L7.2 11 L8.3 7.6 L6.6 7.6 Z" fill="#eea010"/></svg>
<div class="a" style="left:646px;top:75px;width:1px;height:13px;background:#b4b4b4"></div>
<svg class="a" style="left:652px;top:76px;" width="12" height="12" viewBox="0 0 12 12"><rect x="0.5" y="0.5" width="8" height="8.5" fill="#eeeeee" stroke="#747474"/><rect x="2" y="2.5" width="5" height="1" fill="#8a8a8a"/><rect x="2" y="4.5" width="2" height="1" fill="#8a8a8a"/><path class="ge" d="M6 5.2 L8 7.2 L6 9.2 L4 7.2 Z M9.2 7.8 L11.2 9.8 L9.2 11.8 L7.2 9.8 Z M4.2 8.6 L6 10.4 L4.2 12 L2.6 10.4 Z" fill="#3c3c3c"/></svg>
<svg class="a" style="left:673px;top:76px;" width="10" height="7" viewBox="0 0 10 7"><rect x="0.5" y="0.5" width="8.5" height="6.5" fill="#efefef" stroke="#747474"/><rect x="2" y="2.5" width="5.5" height="1" fill="#8a8a8a"/><rect x="2" y="4.5" width="5.5" height="1" fill="#8a8a8a"/></svg>
<svg class="a" style="left:673px;top:83px;shape-rendering:geometricPrecision" width="11" height="5" viewBox="0 0 11 5"><path d="M0.5 0 V4.5 M2 4.5 V0 L4.5 4.5 V0 M5.8 0 V4.5 M7 0.5 H10 M8.5 0.5 V4.5" stroke="#555" stroke-width="0.9" fill="none"/></svg>
<div class="a" style="left:564px;top:93px;width:190px;height:16px;background:#fff;border:1px solid #c0c0c0;border-radius:1px"></div>
<div class="t" style="left:566.5px;top:96px;font-size:9.5px;letter-spacing:0.096px;color:#a3a3a3">Input filter text</div>
<div class="a" style="left:561px;top:109px;width:191px;height:18px;background:#d0d0d1"></div>
<svg class="a" style="left:563px;top:118px;" width="6" height="3" viewBox="0 0 6 3"><path d="M0 0 L5.5 0 L2.75 3 Z" fill="#444" class="ge"/></svg>
<div class="t" style="left:582.2px;top:114px;font-size:9.5px;letter-spacing:0.157px;color:#2a2a2a">Information</div>
<div class="a" style="left:571px;top:128px;width:123px;height:17px;background:#e6e6e7"></div>
<div class="a" style="left:695px;top:128px;width:56px;height:17px;background:#ffffff"></div>
<div class="a" style="left:571px;top:145px;width:180px;height:1px;background:#c9c9c9"></div>
<div class="a" style="left:694px;top:128px;width:1px;height:17px;background:#d2d2d2"></div>
<div class="t" style="left:582.2px;top:132px;font-size:9.5px;letter-spacing:-0.515px;color:#2a2a2a">cssclass</div>
<div class="a" style="left:571px;top:146px;width:123px;height:17px;background:#e6e6e7"></div>
<div class="a" style="left:695px;top:146px;width:56px;height:17px;background:#ffffff"></div>
<div class="a" style="left:571px;top:163px;width:180px;height:1px;background:#c9c9c9"></div>
<div class="a" style="left:694px;top:146px;width:1px;height:17px;background:#d2d2d2"></div>
<div class="t" style="left:582.2px;top:149px;font-size:9.5px;letter-spacing:0.394px;color:#2a2a2a">id</div>
<div class="t" style="left:698.2px;top:149px;font-size:9.5px;letter-spacing:0.191px;font-weight:bold;color:#2a2a2a">View00</div>
<div class="a" style="left:571px;top:164px;width:123px;height:16px;background:#e6e6e7"></div>
<div class="a" style="left:695px;top:164px;width:56px;height:16px;background:#ffffff"></div>
<div class="a" style="left:571px;top:180px;width:180px;height:1px;background:#c9c9c9"></div>
<div class="a" style="left:694px;top:164px;width:1px;height:16px;background:#d2d2d2"></div>
<div class="t" style="left:582.2px;top:167px;font-size:9.5px;letter-spacing:0.065px;color:#2a2a2a">initvalueid</div>
<div class="a" style="left:571px;top:181px;width:123px;height:17px;background:#e6e6e7"></div>
<div class="a" style="left:695px;top:181px;width:56px;height:17px;background:#ffffff"></div>
<div class="a" style="left:571px;top:198px;width:180px;height:1px;background:#c9c9c9"></div>
<div class="a" style="left:694px;top:181px;width:1px;height:17px;background:#d2d2d2"></div>
<div class="t" style="left:582.2px;top:185px;font-size:9.5px;letter-spacing:0.062px;color:#2a2a2a">viewtype</div>
<div class="t" style="left:698.6px;top:185px;font-size:9.5px;color:#a4a4a4;letter-spacing:-0.1px">&lt;empty value&gt;</div>
<div class="a" style="left:561px;top:199px;width:191px;height:17px;background:#d0d0d1"></div>
<div class="a" style="left:561px;top:198px;width:191px;height:1px;background:#c6c6c6"></div>
<svg class="a" style="left:563px;top:207px;" width="6" height="3" viewBox="0 0 6 3"><path d="M0 0 L5.5 0 L2.75 3 Z" fill="#444" class="ge"/></svg>
<div class="t" style="left:582.2px;top:202px;font-size:9.5px;letter-spacing:0.299px;color:#2a2a2a">Action</div>
<div class="a" style="left:571px;top:217px;width:123px;height:17px;background:#e6e6e7"></div>
<div class="a" style="left:695px;top:217px;width:56px;height:17px;background:#ffffff"></div>
<div class="a" style="left:571px;top:234px;width:180px;height:1px;background:#c9c9c9"></div>
<div class="a" style="left:694px;top:217px;width:1px;height:17px;background:#d2d2d2"></div>
<div class="t" style="left:582.2px;top:220px;font-size:9.5px;letter-spacing:-0.146px;color:#2a2a2a">enable</div>
<div class="t" style="left:698.2px;top:220px;font-size:9.5px;letter-spacing:0.175px;color:#2a2a2a">true</div>
<div class="a" style="left:571px;top:235px;width:123px;height:17px;background:#e6e6e7"></div>
<div class="a" style="left:695px;top:235px;width:56px;height:17px;background:#ffffff"></div>
<div class="a" style="left:571px;top:252px;width:180px;height:1px;background:#c9c9c9"></div>
<div class="a" style="left:694px;top:235px;width:1px;height:17px;background:#d2d2d2"></div>
<div class="t" style="left:582.2px;top:238px;font-size:9.5px;letter-spacing:-0.208px;color:#2a2a2a">enableevent</div>
<div class="t" style="left:698.2px;top:238px;font-size:9.5px;letter-spacing:0.175px;color:#2a2a2a">true</div>
<div class="a" style="left:571px;top:253px;width:123px;height:16px;background:#e6e6e7"></div>
<div class="a" style="left:695px;top:253px;width:56px;height:16px;background:#ffffff"></div>
<div class="a" style="left:571px;top:269px;width:180px;height:1px;background:#c9c9c9"></div>
<div class="a" style="left:694px;top:253px;width:1px;height:16px;background:#d2d2d2"></div>
<div class="t" style="left:582.2px;top:255px;font-size:9.5px;letter-spacing:0.040px;color:#2a2a2a">formscrollbartype</div>
<div class="a" style="left:571px;top:270px;width:123px;height:17px;background:#e6e6e7"></div>
<div class="a" style="left:695px;top:270px;width:56px;height:17px;background:#ffffff"></div>
<div class="a" style="left:571px;top:287px;width:180px;height:1px;background:#c9c9c9"></div>
<div class="a" style="left:694px;top:270px;width:1px;height:17px;background:#d2d2d2"></div>
<div class="t" style="left:582.2px;top:273px;font-size:9.5px;letter-spacing:0.098px;color:#2a2a2a">formscrolltype</div>
<div class="a" style="left:571px;top:288px;width:123px;height:17px;background:#e6e6e7"></div>
<div class="a" style="left:695px;top:288px;width:56px;height:17px;background:#ffffff"></div>
<div class="a" style="left:571px;top:305px;width:180px;height:1px;background:#c9c9c9"></div>
<div class="a" style="left:694px;top:288px;width:1px;height:17px;background:#d2d2d2"></div>
<div class="t" style="left:582.2px;top:291px;font-size:9.5px;letter-spacing:0.020px;color:#2a2a2a">hotkey</div>
<div class="a" style="left:571px;top:306px;width:123px;height:17px;background:#e6e6e7"></div>
<div class="a" style="left:695px;top:306px;width:56px;height:17px;background:#ffffff"></div>
<div class="a" style="left:571px;top:323px;width:180px;height:1px;background:#c9c9c9"></div>
<div class="a" style="left:694px;top:306px;width:1px;height:17px;background:#d2d2d2"></div>
<div class="t" style="left:582.2px;top:309px;font-size:9.5px;letter-spacing:0.389px;color:#2a2a2a">rtl</div>
<div class="a" style="left:571px;top:324px;width:123px;height:16px;background:#e6e6e7"></div>
<div class="a" style="left:695px;top:324px;width:56px;height:16px;background:#ffffff"></div>
<div class="a" style="left:571px;top:340px;width:180px;height:1px;background:#c9c9c9"></div>
<div class="a" style="left:694px;top:324px;width:1px;height:16px;background:#d2d2d2"></div>
<div class="t" style="left:582.2px;top:326px;font-size:9.5px;letter-spacing:-0.013px;color:#2a2a2a">taborder</div>
<div class="t" style="left:698.2px;top:326px;font-size:9.5px;letter-spacing:0.603px;font-weight:bold;color:#2a2a2a">0</div>
<div class="a" style="left:571px;top:341px;width:123px;height:17px;background:#e6e6e7"></div>
<div class="a" style="left:695px;top:341px;width:56px;height:17px;background:#ffffff"></div>
<div class="a" style="left:571px;top:358px;width:180px;height:1px;background:#c9c9c9"></div>
<div class="a" style="left:694px;top:341px;width:1px;height:17px;background:#d2d2d2"></div>
<div class="t" style="left:582.2px;top:344px;font-size:9.5px;letter-spacing:0.038px;color:#2a2a2a">tabstop</div>
<div class="t" style="left:698.2px;top:344px;font-size:9.5px;letter-spacing:0.175px;color:#2a2a2a">true</div>
<div class="a" style="left:571px;top:359px;width:123px;height:17px;background:#e6e6e7"></div>
<div class="a" style="left:695px;top:359px;width:56px;height:17px;background:#ffffff"></div>
<div class="a" style="left:571px;top:376px;width:180px;height:1px;background:#c9c9c9"></div>
<div class="a" style="left:694px;top:359px;width:1px;height:17px;background:#d2d2d2"></div>
<div class="t" style="left:582.2px;top:362px;font-size:9.5px;letter-spacing:0.329px;color:#2a2a2a">text</div>
<div class="t" style="left:698.2px;top:362px;font-size:9.5px;letter-spacing:0.191px;font-weight:bold;color:#2a2a2a">View00</div>
<div class="a" style="left:571px;top:377px;width:123px;height:17px;background:#e6e6e7"></div>
<div class="a" style="left:695px;top:377px;width:56px;height:17px;background:#ffffff"></div>
<div class="a" style="left:571px;top:394px;width:180px;height:1px;background:#c9c9c9"></div>
<div class="a" style="left:694px;top:377px;width:1px;height:17px;background:#d2d2d2"></div>
<div class="t" style="left:582.2px;top:380px;font-size:9.5px;letter-spacing:0.263px;color:#2a2a2a">tooltiptext</div>
<div class="a" style="left:571px;top:395px;width:123px;height:17px;background:#e6e6e7"></div>
<div class="a" style="left:695px;top:395px;width:56px;height:17px;background:#ffffff"></div>
<div class="a" style="left:571px;top:412px;width:180px;height:1px;background:#c9c9c9"></div>
<div class="a" style="left:694px;top:395px;width:1px;height:17px;background:#d2d2d2"></div>
<div class="t" style="left:582.2px;top:397px;font-size:9.5px;letter-spacing:0.229px;color:#2a2a2a">tooltiptype</div>
<div class="t" style="left:698.2px;top:397px;font-size:9.5px;letter-spacing:0.061px;color:#2a2a2a">default</div>
<div class="a" style="left:571px;top:413px;width:123px;height:16px;background:#e6e6e7"></div>
<div class="a" style="left:695px;top:413px;width:56px;height:16px;background:#ffffff"></div>
<div class="a" style="left:571px;top:429px;width:180px;height:1px;background:#c9c9c9"></div>
<div class="a" style="left:694px;top:413px;width:1px;height:16px;background:#d2d2d2"></div>
<div class="t" style="left:582.2px;top:415px;font-size:9.5px;letter-spacing:0.099px;color:#2a2a2a">visible</div>
<div class="a" style="left:368px;top:32px;width:41px;height:18px;background:rgba(0,0,0,0.10)"></div>
<div class="a" style="left:367px;top:31px;width:41px;height:18px;background:rgba(0,0,0,0.10)"></div>
<div class="a" style="left:366px;top:30px;width:41px;height:18px;background:#e9e9ec;border:1px solid #a2a2a2"></div>
<svg class="a" style="left:370px;top:33px;" width="13" height="12" viewBox="0 0 13 12"><rect x="0" y="0" width="13" height="12" fill="#f58a4e"/><rect x="2.5" y="1.5" width="8" height="9" fill="#f9c8ab" stroke="#857a74"/><path d="M3 4.5 H5 M5 3.5 V4.5 M8 4.5 H10 M8 3.5 V4.5 M3 7.5 H5 M5 7.5 V8.5 M8 7.5 H10 M8 7.5 V8.5" stroke="#4a4a4a" stroke-width="1" fill="none"/></svg>
<div class="t" style="left:384.5px;top:34px;font-size:9.5px;letter-spacing:0.126px;color:#4a4a4a">View</div>
<svg class="a" style="left:365.6px;top:13.3px;shape-rendering:geometricPrecision" width="12" height="17" viewBox="0 0 12 17"><path d="M1 1 L1 13.5 L4 10.8 L6.3 15.8 L8.3 14.9 L6.1 10 L10 10 Z" fill="#fff" stroke="#1a1a1a" stroke-width="0.9" stroke-linejoin="round"/></svg>
<div class="a" style="left:0px;top:0px;width:752px;height:2px;background:#0e0e0e"></div>
<div class="a" style="left:0px;top:0px;width:2px;height:419px;background:#141414"></div>
<div class="a" style="left:0px;top:417px;width:752px;height:2px;background:#4a4a4a"></div>
<div class="a" style="left:751px;top:2px;width:1px;height:415px;background:#8e8e8e"></div>
</body></html>
